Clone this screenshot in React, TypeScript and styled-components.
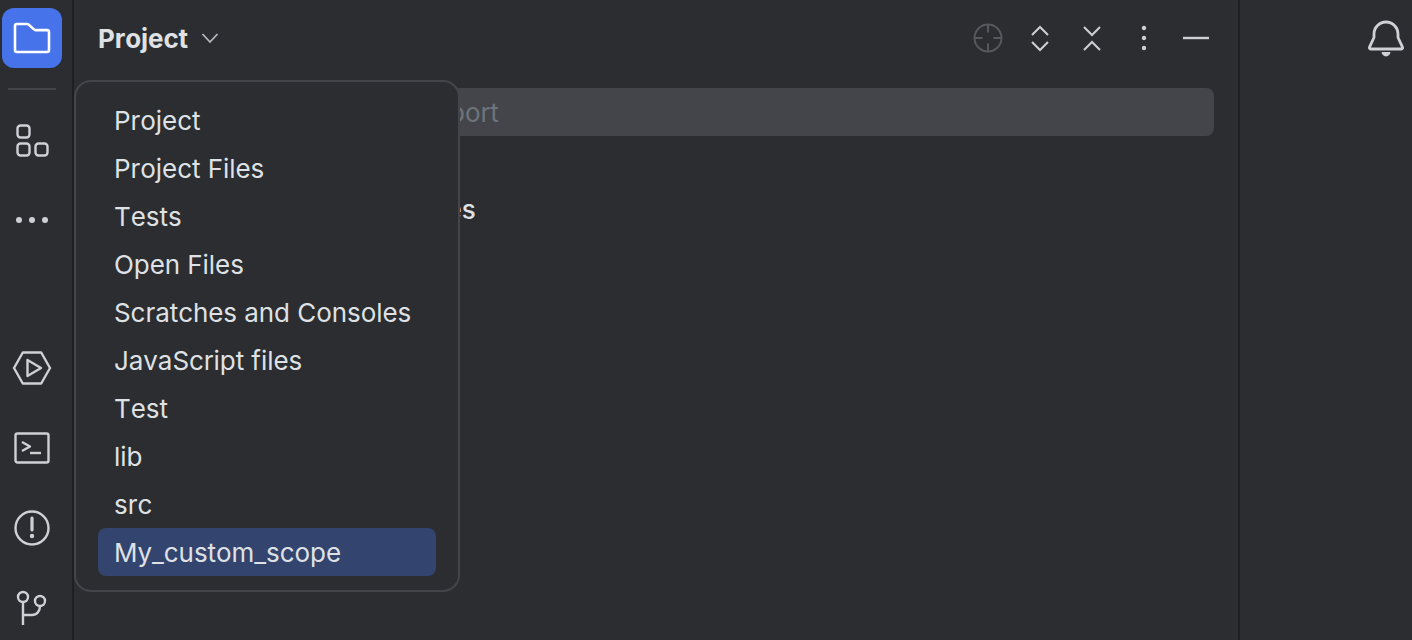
import styled, { createGlobalStyle } from "styled-components";

const scopes = [
  "Project",
  "Project Files",
  "Tests",
  "Open Files",
  "Scratches and Consoles",
  "JavaScript files",
  "Test",
  "lib",
  "src",
  "My_custom_scope",
];

function FolderIcon() {
  return (
    <svg width="40" height="40" viewBox="0 0 40 40" fill="none" stroke="#fff" strokeWidth="2.6" strokeLinejoin="round">
      <path d="M3 8a2 2 0 0 1 2-2h10.200a2 2 0 0 1 1.300.5l5.700 5.100a2 2 0 0 0 1.300.5H35a2 2 0 0 1 2 2V32a2 2 0 0 1-2 2H5a2 2 0 0 1-2-2Z" />
    </svg>
  );
}

function StructureIcon() {
  return (
    <svg width="40" height="40" viewBox="0 0 40 40" fill="none" stroke="#ced0d6" strokeWidth="2.4">
      <rect x="5.500" y="5.500" width="12" height="12" rx="3" />
      <rect x="5.500" y="23.500" width="12" height="12" rx="3" />
      <rect x="23.500" y="23.500" width="12" height="12" rx="3" />
    </svg>
  );
}

function MoreIcon() {
  return (
    <svg width="40" height="40" viewBox="0 0 40 40" fill="#ced0d6">
      <circle cx="7" cy="20" r="3" />
      <circle cx="20" cy="20" r="3" />
      <circle cx="33" cy="20" r="3" />
    </svg>
  );
}

function RunIcon() {
  return (
    <svg width="40" height="40" viewBox="0 0 40 40" fill="none" stroke="#ced0d6" strokeWidth="2.4" strokeLinejoin="round">
      <path d="M2 20 10.800 4.500h18.400L38 20l-8.800 15.500H10.800Z" />
      <path d="M15.500 12 29 20l-13.500 8Z" />
    </svg>
  );
}

function TerminalIcon() {
  return (
    <svg width="40" height="40" viewBox="0 0 40 40" fill="none" stroke="#ced0d6" strokeWidth="2.4" strokeLinejoin="round">
      <rect x="3.500" y="5.500" width="33" height="29" rx="2" />
      <path d="m10 14 8 4.500-8 4.500" />
      <path d="M18 25h11" />
    </svg>
  );
}

function ProblemsIcon() {
  return (
    <svg width="40" height="40" viewBox="0 0 40 40" fill="none" stroke="#ced0d6" strokeWidth="2.4">
      <circle cx="20" cy="20" r="16.500" />
      <path d="M20 10v12" strokeWidth="3.200" strokeLinecap="round" />
      <circle cx="20" cy="28" r="2.200" fill="#ced0d6" stroke="none" />
    </svg>
  );
}

function GitIcon() {
  return (
    <svg width="40" height="40" viewBox="0 0 40 40" fill="none" stroke="#ced0d6" strokeWidth="2.4">
      <circle cx="11" cy="9" r="5" />
      <circle cx="28" cy="13" r="5" />
      <path d="M11 14v23" />
      <path d="M28 18c0 5-3 9-8 9h-9" />
    </svg>
  );
}

function ChevronIcon() {
  return (
    <svg width="20" height="20" viewBox="0 0 20 20" fill="none" stroke="#b4b8bf" strokeWidth="1.800">
      <path d="m2.500 6 7.500 8 7.500-8" />
    </svg>
  );
}

function LocateIcon() {
  return (
    <svg width="40" height="40" viewBox="0 0 40 40" fill="none" stroke="#55585c" strokeWidth="2">
      <circle cx="20" cy="20" r="13.500" />
      <path d="M20 6v8.500M20 25.500V34M6 20h8.500M25.500 20H34" />
    </svg>
  );
}

function ExpandIcon() {
  return (
    <svg width="40" height="40" viewBox="0 0 40 40" fill="none" stroke="#ced0d6" strokeWidth="2">
      <path d="m12 17 8-8 8 8" />
      <path d="m12 24 8 8 8-8" />
    </svg>
  );
}

function CollapseIcon() {
  return (
    <svg width="40" height="40" viewBox="0 0 40 40" fill="none" stroke="#ced0d6" strokeWidth="2">
      <path d="m12 9 8 8 8-8" />
      <path d="m12 32 8-8 8 8" />
    </svg>
  );
}

function KebabIcon() {
  return (
    <svg width="40" height="40" viewBox="0 0 40 40" fill="#ced0d6">
      <circle cx="20" cy="10" r="2.200" />
      <circle cx="20" cy="20" r="2.200" />
      <circle cx="20" cy="30" r="2.200" />
    </svg>
  );
}

function MinimizeIcon() {
  return (
    <svg width="40" height="40" viewBox="0 0 40 40" fill="none" stroke="#ced0d6" strokeWidth="2.400">
      <path d="M7 20h26" />
    </svg>
  );
}

function BellIcon() {
  return (
    <svg width="40" height="40" viewBox="0 0 40 40" fill="none" stroke="#ced0d6" strokeWidth="2.800" strokeLinejoin="round">
      <path d="M8 19.500V16a12 12 0 0 1 24 0v3.500l4.500 9.700a1.200 1.200 0 0 1-1 1.800h-31a1.200 1.200 0 0 1-1-1.800Z" />
      <path d="M15.600 34h8.800a4.400 4.400 0 0 1-8.800 0Z" fill="#ced0d6" stroke="none" />
    </svg>
  );
}

export default function App() {
  return (
    <>
      <GlobalStyle />
      <Window>
        <Rail>
          <RailGroup>
            <RailButton $active>
              <FolderIcon />
            </RailButton>
            <RailDivider />
            <RailButton>
              <StructureIcon />
            </RailButton>
            <RailButton>
              <MoreIcon />
            </RailButton>
          </RailGroup>
          <RailGroup>
            <RailButton>
              <RunIcon />
            </RailButton>
            <RailButton>
              <TerminalIcon />
            </RailButton>
            <RailButton>
              <ProblemsIcon />
            </RailButton>
            <RailButton>
              <GitIcon />
            </RailButton>
          </RailGroup>
        </Rail>

        <Panel>
          <Header>
            <Title>
              Project
              <ChevronIcon />
            </Title>
            <Toolbar>
              <ToolButton>
                <LocateIcon />
              </ToolButton>
              <ToolButton>
                <ExpandIcon />
              </ToolButton>
              <ToolButton>
                <CollapseIcon />
              </ToolButton>
              <ToolButton>
                <KebabIcon />
              </ToolButton>
              <ToolButton>
                <MinimizeIcon />
              </ToolButton>
            </Toolbar>
          </Header>
          <SearchField>import</SearchField>
          <TreeRow>Scratches and Consoles</TreeRow>

          <ScopeMenu>
            {scopes.map((scope) => (
              <ScopeItem key={scope} $selected={scope === "My_custom_scope"}>
                {scope}
              </ScopeItem>
            ))}
          </ScopeMenu>
        </Panel>

        <SideBar>
          <BellIcon />
        </SideBar>
      </Window>
    </>
  );
}

const GlobalStyle = createGlobalStyle`
  html, body {
    margin: 0;
    padding: 0;
    background: #2b2d30;
    overflow: hidden;
  }
  * {
    box-sizing: border-box;
  }
`;

const Window = styled.div`
  display: flex;
  width: 1412px;
  height: 640px;
  background: #2b2d30;
  color: #dfe1e5;
  font-family: Inter, "Liberation Sans", sans-serif;
  font-size: 26px;
  font-kerning: none;
`;

const Rail = styled.nav`
  display: flex;
  flex-direction: column;
  justify-content: space-between;
  flex: none;
  width: 74px;
  padding: 8px 0 2px 2px;
  border-right: 2px solid #1e1f22;
`;

const RailGroup = styled.div`
  display: flex;
  flex-direction: column;
  gap: 20px;
`;

const RailButton = styled.button<{ $active?: boolean }>`
  display: flex;
  align-items: center;
  justify-content: center;
  width: 60px;
  height: 60px;
  padding: 0;
  border: 0;
  border-radius: 12px;
  background: ${(p) => (p.$active ? "#4672ea" : "transparent")};
`;

const RailDivider = styled.div`
  width: 48px;
  height: 2px;
  margin: 0 0 0 6px;
  background: #43454a;
`;

const Panel = styled.main`
  position: relative;
  flex: none;
  width: 1166px;
  padding-right: 22px;
  border-right: 2px solid #1e1f22;
`;

const Header = styled.header`
  display: flex;
  align-items: center;
  justify-content: space-between;
  height: 76px;
  padding-left: 24px;
`;

const Title = styled.h1`
  display: flex;
  align-items: center;
  gap: 12px;
  margin: 0;
  font-size: 26px;
  font-weight: 650;
  letter-spacing: -0.1px;
  color: #dfe1e5;
`;

const Toolbar = styled.div`
  display: flex;
  gap: 12px;
`;

const ToolButton = styled.button`
  display: flex;
  width: 40px;
  height: 40px;
  padding: 0;
  border: 0;
  background: transparent;
`;

const SearchField = styled.div`
  display: flex;
  align-items: center;
  height: 48px;
  margin: 12px 2px 0 24px;
  padding-left: 322px;
  border-radius: 8px;
  background: #43454a;
  color: #6f737a;
`;

const TreeRow = styled.div`
  display: flex;
  align-items: center;
  height: 48px;
  margin-top: 49px;
  padding-left: 100px;
  font-weight: 500;
  white-space: nowrap;
`;

const ScopeMenu = styled.ul`
  position: absolute;
  top: 80px;
  left: 0;
  display: flex;
  flex-direction: column;
  width: 386px;
  height: 512px;
  margin: 0;
  padding: 14px 22px;
  list-style: none;
  background: #2b2d30;
  border: 2px solid #43454a;
  border-radius: 17px;
`;

const ScopeItem = styled.li<{ $selected?: boolean }>`
  display: flex;
  align-items: center;
  flex: none;
  height: 48px;
  padding-left: 16px;
  border-radius: 8px;
  background: ${(p) => (p.$selected ? "#33446e" : "transparent")};
  letter-spacing: -0.06px;
  white-space: nowrap;
`;

const SideBar = styled.aside`
  display: flex;
  flex: 1;
  justify-content: flex-end;
  padding: 18px 6px 0 0;
`;
